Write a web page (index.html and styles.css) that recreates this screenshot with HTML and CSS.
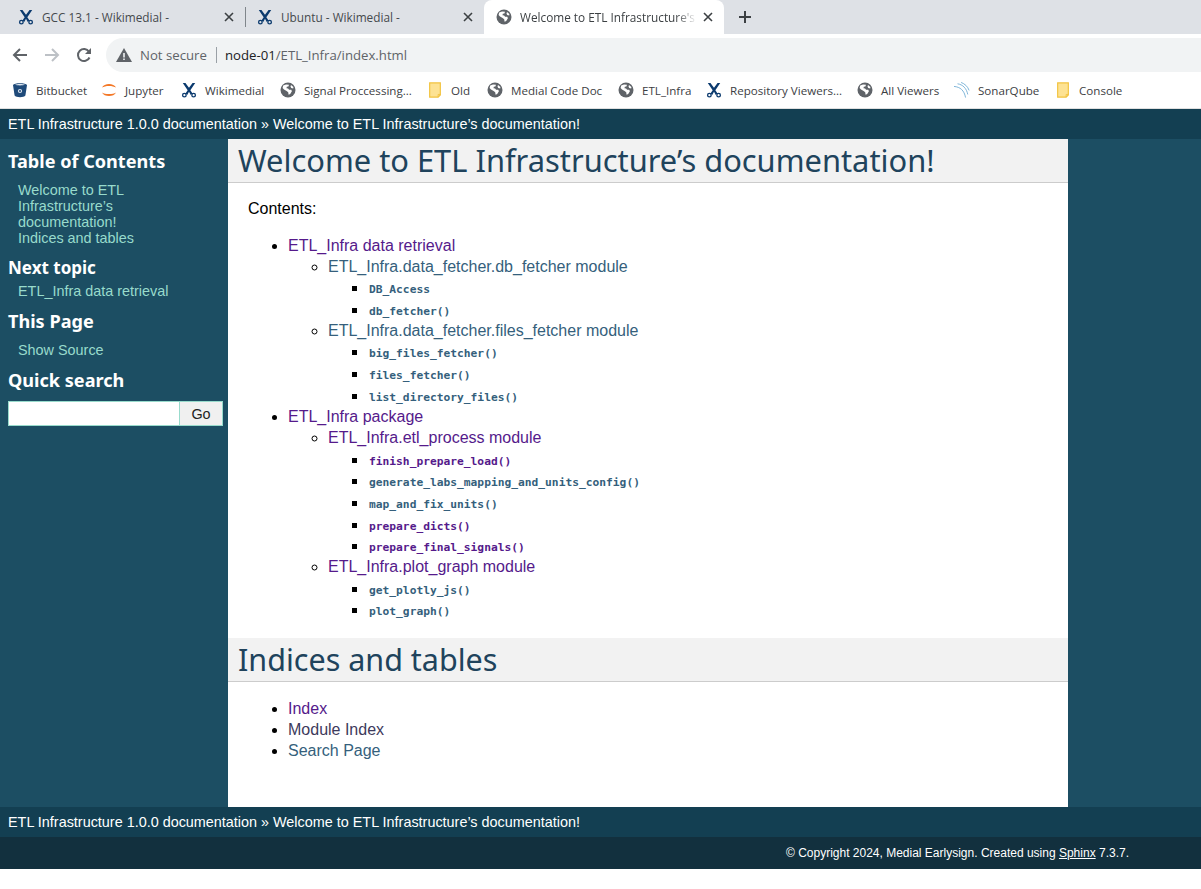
FILE: index.html

```html
<!DOCTYPE html>
<html lang="en">
  <head>
    <meta charset="UTF-8" />
    <title>Welcome to ETL Infrastructure's documentation!</title>
    <link rel="stylesheet" href="styles.css">
  </head>
  <body>
    <svg class="defs" width="0" height="0">
      <symbol id="i-globe" viewBox="0 0 16 16">
        <circle cx="8" cy="8" r="7.5" fill="#5f6368" />
        <path fill="#fff" d="M3.2 3.6 6 2.5l3 .3-.6 1.6-1.6.3-.3 1.5 1.6.2 1 1.3 2.2.1.6 1.5-1.7 2.6-1.6.9-.4-2.5L6.6 9 4 7.4 2.6 6z" />
        <path fill="#fff" d="m11 3 2.4 2-.2 1.500-2-.4-.7-1.600z" />
      </symbol>
      <symbol id="i-tool" viewBox="0 0 18 18">
        <path fill="#0b3a6e" d="M2 1h3l4 5.500L13 1h3l-5.500 8.200L13 13l-2 1.500-2-3.500-2 3.500L5 13l2.500-3.800z" />
        <circle cx="3.800" cy="14.800" r="2" fill="none" stroke="#0b3a6e" stroke-width="1.500" />
        <circle cx="14.200" cy="14.800" r="2" fill="none" stroke="#0b3a6e" stroke-width="1.500" />
      </symbol>
      <symbol id="i-bitbucket" viewBox="0 0 16 16">
        <path fill="#1f4a7a" d="M1 3C2 .6 14 .6 15 3l-1.600 10.500C12 15.800 4 15.800 2.600 13.500z" />
        <path fill="#dfe7f0" d="M3 2.800c2-1 8-1 10 0-2 .8-8 .8-10 0z" />
        <circle cx="8" cy="9" r="2.100" fill="#dfe7f0" />
        <circle cx="8" cy="9" r="1" fill="#1f4a7a" />
      </symbol>
      <symbol id="i-jupyter" viewBox="0 0 16 16">
        <path fill="#f37726" d="M1 5.500C3 .8 13 .8 15 5.500 12 3.400 4 3.400 1 5.500zM1 10.500C3 15.200 13 15.200 15 10.500 12 12.600 4 12.600 1 10.500z" />
      </symbol>
      <symbol id="i-sonar" viewBox="0 0 18 18">
        <path fill="none" stroke="#7db4d8" stroke-width="1.100" d="M0 5c7 .5 11.500 4.500 13 12.500M4 2c6 1 10 5 11.500 12M8 .5c4 1.500 7.500 4.500 9 9" />
      </symbol>
      <symbol id="i-folder" viewBox="0 0 14 18">
        <path fill="#fde293" stroke="#f2c23e" stroke-width="1.300" d="M1 1h12v13.500L10.500 17H1z" />
        <path fill="none" stroke="#f2c23e" stroke-width="1" d="M10.500 17v-3h2.500" />
      </symbol>
      <symbol id="i-close" viewBox="0 0 10 10">
        <path stroke="#3c4043" stroke-width="1.600" d="m1 1 8 8M9 1 1 9" />
      </symbol>
    </svg>

    <div class="tabstrip">
      <div class="tab">
        <svg class="tab-icon"><use href="#i-tool" /></svg>
        <span class="tab-title">GCC 13.1 - Wikimedial -</span>
        <svg class="tab-close"><use href="#i-close" /></svg>
      </div>
      <div class="tab tab-divided">
        <svg class="tab-icon"><use href="#i-tool" /></svg>
        <span class="tab-title">Ubuntu - Wikimedial -</span>
        <svg class="tab-close"><use href="#i-close" /></svg>
      </div>
      <div class="tab tab-active">
        <svg class="tab-icon"><use href="#i-globe" /></svg>
        <span class="tab-title tab-fade">Welcome to ETL Infrastructure's d</span>
        <svg class="tab-close"><use href="#i-close" /></svg>
      </div>
      <svg class="new-tab" width="14" height="14" viewBox="0 0 14 14">
        <path stroke="#3c4043" stroke-width="2" d="M7 1v12M1 7h12" />
      </svg>
    </div>

    <div class="toolbar">
      <svg class="nav-icon" width="16" height="16" viewBox="0 0 16 16">
        <path fill="none" stroke="#5f6368" stroke-width="2" d="M15 8H2M8 2 2 8l6 6" />
      </svg>
      <svg class="nav-icon" width="16" height="16" viewBox="0 0 16 16">
        <path fill="none" stroke="#bdc1c6" stroke-width="2" d="M1 8h13M8 2l6 6-6 6" />
      </svg>
      <svg class="nav-icon" width="16" height="16" viewBox="0 0 16 16">
        <path fill="none" stroke="#5f6368" stroke-width="2" d="M13.500 10.500A6 6 0 1 1 13 4.700" />
        <path fill="#5f6368" d="M15 1v6H9z" />
      </svg>
      <div class="omnibox">
        <svg width="16" height="14" viewBox="0 0 16 14">
          <path fill="#5f6368" d="M8 0 16 14H0z" />
          <path fill="#f1f3f4" d="M7.200 5h1.600v4.500H7.200zM7.200 10.500h1.600v1.500H7.200z" />
        </svg>
        <span class="not-secure">Not secure</span>
        <span class="url"><span class="url-host">node-01</span>/ETL_Infra/index.html</span>
      </div>
    </div>

    <div class="bookmarks">
      <a class="bm bm-1"><svg><use href="#i-bitbucket" /></svg>Bitbucket</a>
      <a class="bm bm-2"><svg><use href="#i-jupyter" /></svg>Jupyter</a>
      <a class="bm bm-3"><svg><use href="#i-tool" /></svg>Wikimedial</a>
      <a class="bm bm-4"><svg><use href="#i-globe" /></svg>Signal Proccessing...</a>
      <a class="bm bm-5"><svg><use href="#i-folder" /></svg>Old</a>
      <a class="bm bm-6"><svg><use href="#i-globe" /></svg>Medial Code Doc</a>
      <a class="bm bm-7"><svg><use href="#i-globe" /></svg>ETL_Infra</a>
      <a class="bm bm-8"><svg><use href="#i-tool" /></svg>Repository Viewers...</a>
      <a class="bm bm-9"><svg><use href="#i-globe" /></svg>All Viewers</a>
      <a class="bm bm-10"><svg><use href="#i-sonar" /></svg>SonarQube</a>
      <a class="bm bm-11"><svg><use href="#i-folder" /></svg>Console</a>
    </div>

    <div class="related">ETL Infrastructure 1.0.0 documentation &raquo; Welcome to ETL Infrastructure&rsquo;s documentation!</div>

    <div class="document-wrap">
      <div class="sphinxsidebar">
        <h3>Table of Contents</h3>
        <ul class="side-toc">
          <li><a>Welcome to ETL Infrastructure&rsquo;s documentation!</a></li>
          <li><a>Indices and tables</a></li>
        </ul>
        <h4 class="next-topic">Next topic</h4>
        <p class="side-link side-next"><a>ETL_Infra data retrieval</a></p>
        <h3 class="this-page">This Page</h3>
        <p class="side-link side-source"><a>Show Source</a></p>
        <h3 class="quick-search">Quick search</h3>
        <form class="searchbox">
          <input type="text" />
          <button type="button">Go</button>
        </form>
      </div>

      <div class="body">
        <h1>Welcome to ETL Infrastructure&rsquo;s documentation!</h1>
        <div class="section">
          <p class="caption">Contents:</p>
          <ul class="toc">
            <li>
              <a class="seen">ETL_Infra data retrieval</a>
              <ul>
                <li>
                  <a>ETL_Infra.data_fetcher.db_fetcher module</a>
                  <ul>
                    <li><a><code>DB_Access</code></a></li>
                    <li><a><code>db_fetcher()</code></a></li>
                  </ul>
                </li>
                <li>
                  <a>ETL_Infra.data_fetcher.files_fetcher module</a>
                  <ul>
                    <li><a><code>big_files_fetcher()</code></a></li>
                    <li><a><code>files_fetcher()</code></a></li>
                    <li><a><code>list_directory_files()</code></a></li>
                  </ul>
                </li>
              </ul>
            </li>
            <li class="toc-package">
              <a class="seen">ETL_Infra package</a>
              <ul>
                <li>
                  <a class="seen">ETL_Infra.etl_process module</a>
                  <ul>
                    <li><a class="seen"><code>finish_prepare_load()</code></a></li>
                    <li><a><code>generate_labs_mapping_and_units_config()</code></a></li>
                    <li><a><code>map_and_fix_units()</code></a></li>
                    <li><a class="seen"><code>prepare_dicts()</code></a></li>
                    <li><a class="seen"><code>prepare_final_signals()</code></a></li>
                  </ul>
                </li>
                <li>
                  <a class="seen">ETL_Infra.plot_graph module</a>
                  <ul>
                    <li><a><code>get_plotly_js()</code></a></li>
                    <li><a><code>plot_graph()</code></a></li>
                  </ul>
                </li>
              </ul>
            </li>
          </ul>
        </div>
        <h2>Indices and tables</h2>
        <div class="section">
          <ul class="indices">
            <li><a class="seen">Index</a></li>
            <li><a class="dark">Module Index</a></li>
            <li><a>Search Page</a></li>
          </ul>
        </div>
      </div>
      <div class="right-strip"></div>
    </div>

    <div class="related">ETL Infrastructure 1.0.0 documentation &raquo; Welcome to ETL Infrastructure&rsquo;s documentation!</div>
    <div class="footer">&copy; Copyright 2024, Medial Earlysign. Created using <a>Sphinx</a> 7.3.7.</div>
  </body>
</html>
```

FILE: styles.css

```css
body {
  margin: 0;
  font-family: "Liberation Sans", Arial, sans-serif;
  font-size: 16px;
  background: #fff;
}
.defs {
  position: absolute;
}

/* browser chrome */
.tabstrip {
  display: flex;
  align-items: center;
  height: 34px;
  background: #dee1e6;
  font-family: "Open Sans", sans-serif;
  font-size: 11.800px;
  color: #45494d;
}
.tab {
  display: flex;
  align-items: center;
  box-sizing: border-box;
  width: 245px;
  height: 34px;
  padding: 0 11px 0 18px;
}
.tab-divided {
  border-left: 1px solid #80868b;
  height: 20px;
  width: 239px;
  padding-left: 11px;
}
.tab-active {
  width: 240px;
  background: #fff;
  border-radius: 8px 8px 0 0;
  padding-left: 12px;
  color: #3c4043;
}
.tab-icon {
  flex: none;
  width: 16px;
  height: 16px;
  margin-right: 8px;
}
.tab-title {
  flex: 1;
  overflow: hidden;
  white-space: nowrap;
}
.tab-fade {
  mask-image: linear-gradient(to right, #000 88%, transparent);
}
.tab-close {
  flex: none;
  width: 10px;
  height: 10px;
  margin-left: 6px;
}
.new-tab {
  margin-left: 14px;
}
.toolbar {
  display: flex;
  align-items: center;
  height: 38px;
  box-sizing: border-box;
  padding: 4px 0 0 12px;
  background: #fff;
}
.nav-icon {
  margin-right: 16px;
}
.omnibox {
  flex: 1;
  display: flex;
  align-items: center;
  height: 34px;
  margin-left: -2px;
  padding-left: 10px;
  background: #f1f3f4;
  border-radius: 17px 0 0 17px;
  font-family: "Open Sans", sans-serif;
  font-size: 13.200px;
  color: #5f6368;
}
.not-secure {
  margin-left: 8px;
  padding-right: 9px;
  border-right: 1px solid #9aa0a6;
  line-height: 16px;
}
.url {
  margin-left: 8px;
}
.url-host {
  color: #202124;
}
.bookmarks {
  display: flex;
  align-items: center;
  height: 36px;
  padding-left: 12px;
  border-bottom: 1px solid #e0e0e0;
  font-family: "Open Sans", sans-serif;
  font-size: 11.600px;
  color: #3c4043;
}
.bm {
  flex: none;
  display: flex;
  align-items: center;
  white-space: nowrap;
}
.bm svg {
  width: 16px;
  height: 16px;
  margin-right: 8px;
}
.bm-1 { width: 89px; }
.bm-2 { width: 80px; }
.bm-3 { width: 99px; }
.bm-4 { width: 147px; }
.bm-5 { width: 60px; }
.bm-6 { width: 131px; }
.bm-7 { width: 88px; }
.bm-8 { width: 151px; }
.bm-9 { width: 97px; }
.bm-10 { width: 101px; }

/* sphinx page */
.related {
  height: 30px;
  line-height: 30px;
  padding-left: 8px;
  background: #133f52;
  color: #fff;
  font-size: 14.400px;
}
.document-wrap {
  display: flex;
  height: 668px;
  background: #1c4e63;
}
.sphinxsidebar {
  box-sizing: border-box;
  width: 228px;
  padding: 10px 5px 0 8px;
  color: #fff;
  font-size: 14.400px;
  line-height: 16px;
}
.sphinxsidebar h3,
.sphinxsidebar h4 {
  margin: 0;
  font-family: "Noto Sans", sans-serif;
  font-size: 18.100px;
  font-weight: 700;
  line-height: 24px;
  color: #fff;
}
.sphinxsidebar h4 {
  font-size: 17px;
}
.sphinxsidebar a {
  color: #98dbcc;
}
.side-toc {
  list-style: none;
  margin: 9px 0 0;
  padding: 0 60px 0 10px;
}
.next-topic {
  padding-top: 10px;
}
.side-link {
  margin: 0;
  padding-left: 10px;
}
.side-next {
  margin-top: 3px;
}
.this-page {
  padding-top: 10px;
}
.side-source {
  margin-top: 9px;
}
.quick-search {
  padding-top: 10px;
}
.searchbox {
  display: flex;
  height: 25px;
  margin-top: 9px;
}
.searchbox input {
  box-sizing: border-box;
  width: 172px;
  height: 25px;
  border: 1px solid #98dbcc;
  padding: 2px;
  margin: 0;
  background: #fff;
}
.searchbox button {
  box-sizing: border-box;
  width: 44px;
  height: 25px;
  margin: 0;
  padding: 0;
  border: 1px solid #98dbcc;
  border-left: 0;
  background: #f0f0f0;
  font-family: "Liberation Sans", sans-serif;
  font-size: 14.400px;
  color: #222;
}
.body {
  width: 840px;
  background: #fff;
  color: #000;
  line-height: 20.800px;
}
.right-strip {
  flex: 1;
}
.body h1,
.body h2 {
  margin: 0;
  padding: 3px 0 3px 10px;
  background: #f2f2f2;
  border-bottom: 1px solid #ccc;
  font-family: "Noto Sans", sans-serif;
  font-weight: 400;
  color: #20435c;
}
.body h1 {
  font-size: 30.850px;
  line-height: 37px;
}
.body h2 {
  font-size: 30.500px;
  line-height: 37px;
  margin-top: 17px;
}
.section {
  padding: 0 20px;
}
.caption {
  margin: 16px 0 16px;
}
.body a {
  color: #355f7c;
}
.body a.seen {
  color: #551a8b;
}
.body a.dark {
  color: #3d3a5c;
}
.body ul {
  margin: 0;
  padding-left: 40px;
}
.toc .toc-package {
  margin-top: 1px;
}
.toc ul ul li {
  height: 21.600px;
  line-height: 21.600px;
}
.body code {
  padding-left: 1px;
  font-family: "DejaVu Sans Mono", monospace;
  font-size: 11.250px;
  font-weight: 700;
  line-height: 1;
}
.section .indices {
  margin-top: 16px;
  line-height: 21px;
}
.footer {
  height: 32px;
  line-height: 32px;
  padding-right: 72px;
  text-align: right;
  background: #12303e;
  color: #fff;
  font-size: 12px;
}
.footer a {
  color: #fff;
  text-decoration: underline;
}
```
